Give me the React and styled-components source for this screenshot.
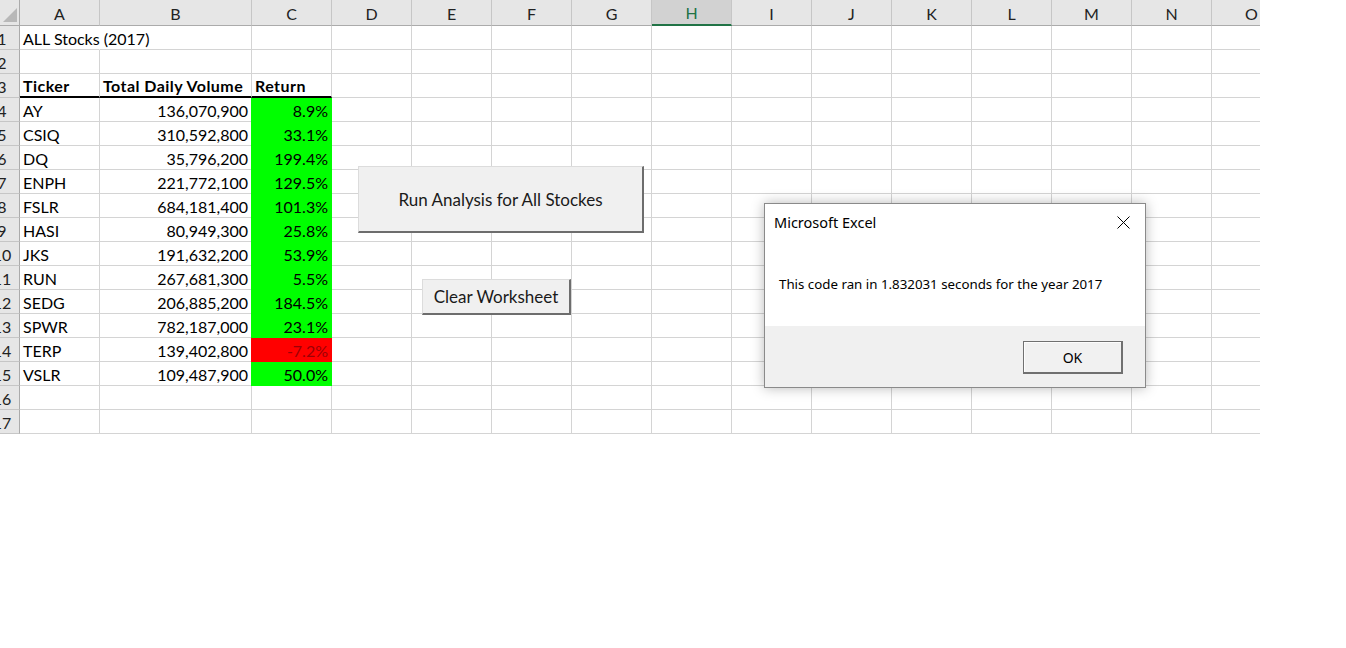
import React from "react";
import styled, { createGlobalStyle } from "styled-components";

const GlobalStyle = createGlobalStyle`
  html, body {
    margin:0;
    padding:0;
    background:#fff;
  }
  body {
    font-family:"Lato", "Liberation Sans", sans-serif;
    color:#000;
  }
`;

const COLS = ["A","B","C","D","E","F","G","H","I","J","K","L","M","N","O"];
const COL_WIDTHS = [80,152,80,80,80,80,80,80,80,80,80,80,80,80,80];
const ROW_COUNT = 17;

const rows = [
  ["AY","136,070,900","8.9%"],
  ["CSIQ","310,592,800","33.1%"],
  ["DQ","35,796,200","199.4%"],
  ["ENPH","221,772,100","129.5%"],
  ["FSLR","684,181,400","101.3%"],
  ["HASI","80,949,300","25.8%"],
  ["JKS","191,632,200","53.9%"],
  ["RUN","267,681,300","5.5%"],
  ["SEDG","206,885,200","184.5%"],
  ["SPWR","782,187,000","23.1%"],
  ["TERP","139,402,800","-7.2%"],
  ["VSLR","109,487,900","50.0%"],
];

const Page = styled.div`
  width:1346px;
  height:648px;
  background:#fff;
  overflow:hidden;
`;

const Sheet = styled.div`
  position:relative;
  width:1260px;
`;

const Grid = styled.div`
  display:grid;
  width:1260px;
  overflow:hidden;
  grid-template-columns:20px ${COL_WIDTHS.map(w => w + "px").join(" ")};
  grid-template-rows:26px repeat(${ROW_COUNT}, 24px);
  font-size:16px;
  background:#fff;
`;

const Corner = styled.div`
  box-sizing:border-box;
  background:#e6e6e6;
  border-right:1px solid #ababab;
  border-bottom:1px solid #ababab;
  display:flex;
  align-items:flex-end;
  justify-content:flex-end;
  padding:0 2px 3px 0;
`;

const ColHeader = styled.div`
  box-sizing:border-box;
  background:${p => p.$active ? "#d2d2d2" : "#e6e6e6"};
  color:${p => p.$active ? "#217346" : "#222"};
  border-right:1px solid #c6c6c6;
  border-bottom:${p => p.$active ? "2px solid #217346" : "1px solid #ababab"};
  display:flex;
  align-items:center;
  justify-content:center;
  padding-top:1px;
  font-size:16px;
  overflow:hidden;
`;

const RowHeader = styled.div`
  box-sizing:border-box;
  background:#e6e6e6;
  border-right:1px solid #ababab;
  border-bottom:1px solid #c6c6c6;
  overflow:hidden;
  display:flex;
  align-items:flex-end;
`;

const RowNum = styled.span`
  flex:none;
  width:36px;
  margin-left:-16px;
  text-align:center;
  line-height:19px;
  color:#222;
  padding-bottom:1px;
`;

const Cell = styled.div`
  box-sizing:border-box;
  background:${p => p.$fill || "transparent"};
  border-right:1px solid ${p => p.$fill || (p.$spill ? "transparent" : "#d4d4d4")};
  border-bottom:${p => p.$thick ? "2px solid #000" : `1px solid ${p.$fill || "#d4d4d4"}`};
  box-shadow:${p => p.$fill ? `-1px 0 0 ${p.$fill}` : "none"};
  color:${p => p.$color || "#000"};
  font-weight:${p => p.$bold ? 700 : 400};
  letter-spacing:${p => p.$bold ? "0.45px" : "0"};
  display:flex;
  align-items:flex-end;
  justify-content:${p => p.$align === "right" ? "flex-end" : "flex-start"};
  padding:0 3px 1px 3px;
  line-height:19px;
  white-space:nowrap;
  overflow:visible;
  position:relative;
  z-index:${p => p.$spill ? 1 : "auto"};
`;

const SheetButton = styled.div`
  position:absolute;
  left:${p => p.$left}px;
  top:${p => p.$top}px;
  width:${p => p.$w}px;
  height:${p => p.$h}px;
  box-sizing:border-box;
  background:#f0f0f0;
  border-top:1px solid #dcdcdc;
  border-left:1px solid #dcdcdc;
  border-right:2px solid #6d6d6d;
  border-bottom:2px solid #6d6d6d;
  display:flex;
  align-items:center;
  justify-content:center;
  font-size:17px;
  color:#1a1a1a;
  z-index:2;
`;

const Dialog = styled.div`
  position:absolute;
  left:764px;
  top:203px;
  width:382px;
  height:185px;
  box-sizing:border-box;
  border:1px solid #8a8a8a;
  background:#fff;
  box-shadow:0 0 12px rgba(0,0,0,0.28);
  display:flex;
  flex-direction:column;
  font-family:"Noto Sans", "Open Sans", sans-serif;
  z-index:3;
`;

const TitleBar = styled.div`
  height:36px;
  display:flex;
  align-items:center;
  justify-content:space-between;
  padding:0 15px 0 9px;
`;

const Title = styled.span`
  font-size:14.5px;
  color:#000;
`;

const CloseIcon = styled.svg`
  width:13px;
  height:13px;
  display:block;
  margin-top:1px;
`;

const Body = styled.div`
  flex:1;
  display:flex;
  align-items:center;
  padding:2px 14px 0 14px;
  font-size:13.3px;
  color:#000;
`;

const Footer = styled.div`
  height:61px;
  background:#f0f0f0;
  display:flex;
  align-items:flex-start;
  justify-content:flex-end;
  padding:15px 22px 0 0;
  box-sizing:border-box;
`;

const OkButton = styled.div`
  width:100px;
  height:33px;
  box-sizing:border-box;
  background:#f1f1f1;
  border:1px solid #707070;
  border-right-width:2px;
  border-bottom-width:2px;
  box-shadow:inset 1px 1px 0 #fdfdfd;
  display:flex;
  align-items:center;
  justify-content:center;
  font-size:14px;
  color:#000;
`;

function cellFor(r, c) {
  // r: 1-based row, c: 0-based column index
  if (r === 1 && c === 0) return { text: "ALL Stocks (2017)", spill: true };
  if (r === 3) {
    if (c === 0) return { text: "Ticker", bold: true, thick: true };
    if (c === 1) return { text: "Total Daily Volume", bold: true, thick: true };
    if (c === 2) return { text: "Return", bold: true, thick: true };
  }
  const d = rows[r - 4];
  if (d && c < 3) {
    if (c === 0) return { text: d[0] };
    if (c === 1) return { text: d[1], align: "right" };
    const neg = d[2].startsWith("-");
    return {
      text: d[2],
      align: "right",
      fill: neg ? "#ff0000" : "#00ff00",
      color: neg ? "#9c0006" : "#000",
    };
  }
  return {};
}

export default function App() {
  const cells = [];
  cells.push(
    <Corner key="corner">
      <svg width="14" height="14" viewBox="0 0 14 14">
        <polygon points="14,0 14,14 0,14" fill="#b8b8b8" />
      </svg>
    </Corner>
  );
  COLS.forEach(c => cells.push(<ColHeader key={"h" + c} $active={c === "H"}>{c}</ColHeader>));
  for (let r = 1; r <= ROW_COUNT; r++) {
    cells.push(
      <RowHeader key={"r" + r}>
        <RowNum>{r}</RowNum>
      </RowHeader>
    );
    COLS.forEach((c, i) => {
      const info = cellFor(r, i);
      cells.push(
        <Cell
          key={c + r}
          $align={info.align}
          $bold={info.bold}
          $fill={info.fill}
          $color={info.color}
          $thick={info.thick}
          $spill={info.spill}
        >
          {info.text}
        </Cell>
      );
    });
  }

  return (
    <Page>
      <GlobalStyle />
      <Sheet>
        <Grid>{cells}</Grid>
        <SheetButton $left={358} $top={166} $w={286} $h={67}>Run Analysis for All Stockes</SheetButton>
        <SheetButton $left={422} $top={279} $w={149} $h={36}>Clear Worksheet</SheetButton>
        <Dialog>
          <TitleBar>
            <Title>Microsoft Excel</Title>
            <CloseIcon viewBox="0 0 13 13">
              <path d="M0.5 0.5 L12.5 12.5 M12.5 0.5 L0.5 12.5" stroke="#000" strokeWidth="1" fill="none" />
            </CloseIcon>
          </TitleBar>
          <Body>This code ran in 1.832031 seconds for the year 2017</Body>
          <Footer>
            <OkButton>OK</OkButton>
          </Footer>
        </Dialog>
      </Sheet>
    </Page>
  );
}
